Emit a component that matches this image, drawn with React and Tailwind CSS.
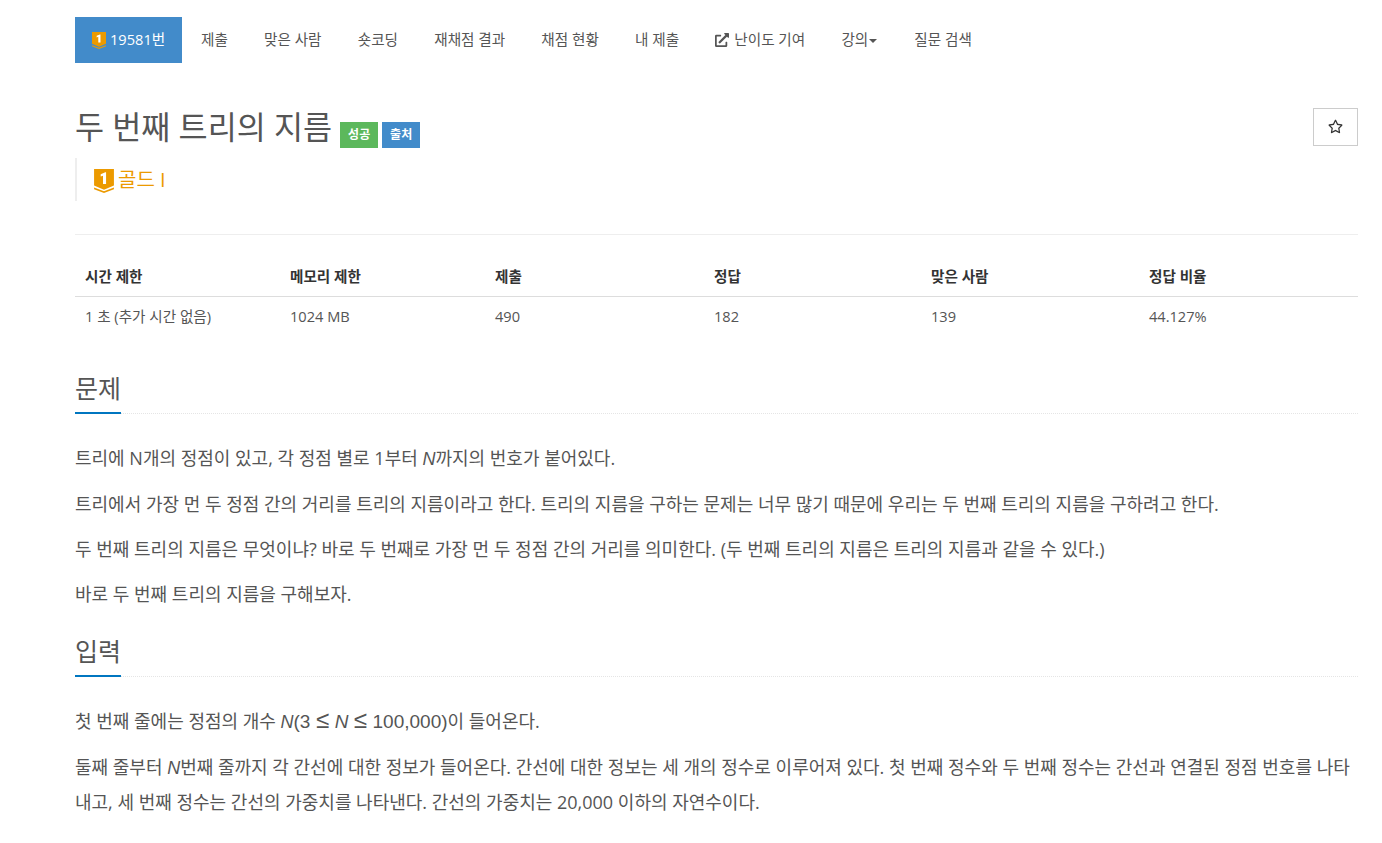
import React from 'react';
import { FaExternalLinkAlt, FaRegStar } from 'react-icons/fa';

const GoldBadge = ({ className }) => (
  <svg viewBox="0 0 24 29" className={className}>
    <path d="M0 0H24V20L12 25L0 20Z" fill="#ec9a00" />
    <path d="M0 22.5L12 27L24 22.5V24.5L12 29L0 24.5Z" fill="#ec9a00" />
    <path d="M14.5 4V18H10.8V8.2L8 9.2V6.4L13.6 4Z" fill="#fff" />
  </svg>
);

const tabs = ['제출', '맞은 사람', '숏코딩', '재채점 결과', '채점 현황', '내 제출'];

const stats = [
  { head: '시간 제한', value: '1 초 (추가 시간 없음)', width: 'w-[205px]' },
  { head: '메모리 제한', value: '1024 MB', width: 'w-[205px]' },
  { head: '제출', value: '490', width: 'w-[219px]' },
  { head: '정답', value: '182', width: 'w-[217px]' },
  { head: '맞은 사람', value: '139', width: 'w-[218px]' },
  { head: '정답 비율', value: '44.127%', width: '' },
];

function Heading({ children }) {
  return (
    <div className="relative border-b border-dotted border-[#e5e5e5] h-[41px]">
      <h2 className="text-[25px] leading-[30px] font-normal text-[#555]">{children}</h2>
      <div className="absolute left-0 bottom-[-1px] w-[46px] h-[2px] bg-[#0076c0]" />
    </div>
  );
}

const MathN = () => <i className="font-['Liberation_Sans',sans-serif]">N</i>;
const Leq = () => <span className="mx-[5.5px] text-[24px] leading-none">≤</span>;

export default function App() {
  return (
    <div className="pl-[75px] pr-[24px] bg-white text-[#555] text-[14.6px] overflow-hidden h-[843px] font-['Open_Sans','Noto_Sans_CJK_KR',sans-serif]">
      {/* Nav */}
      <ul className="flex pt-[17px] h-[63px]">
        <li className="flex items-center h-[46px] w-[107px] pl-[17px] pb-[1px] bg-[#428bca] text-white">
          <GoldBadge className="w-[14px] h-[17px] mr-[4px] mt-[1px]" />
          <span>19581번</span>
        </li>
        {tabs.map((t, i) => (
          <li key={t} className={`flex items-center h-[46px] pr-[18.1px] pb-[1px] whitespace-nowrap ${i === 0 ? 'pl-[19px]' : 'pl-[18.1px]'}`}>{t}</li>
        ))}
        <li className="flex items-center h-[46px] px-[18.1px] pb-[1px] whitespace-nowrap">
          <FaExternalLinkAlt className="w-[14px] h-[14px] mr-[5px]" />
          난이도 기여
        </li>
        <li className="flex items-center h-[46px] px-[18.1px] pb-[1px] whitespace-nowrap">
          강의
          <span className="ml-[1px] mt-[3px] border-x-[4.5px] border-t-[4.5px] border-x-transparent border-t-[#555]" />
        </li>
        <li className="flex items-center h-[46px] pl-[19px] pr-[18px] pb-[1px] whitespace-nowrap">질문 검색</li>
      </ul>

      {/* Title */}
      <div className="flex justify-between items-start pt-[45px]">
        <div className="flex items-start h-[40px]">
          <h1 className="text-[31.6px] leading-[38px] font-normal text-[#555]">두 번째 트리의 지름</h1>
          <span className="ml-[8px] mt-[14px] w-[38px] h-[26px] flex items-center justify-center bg-[#5cb85c] text-white text-[12px] font-bold">성공</span>
          <span className="ml-[4px] mt-[14px] w-[38px] h-[26px] flex items-center justify-center bg-[#428bca] text-white text-[12px] font-bold">출처</span>
        </div>
        <button className="w-[45px] h-[38px] border border-[#ccc] flex items-center justify-center text-[#333]">
          <FaRegStar className="w-[15px] h-[15px] -mt-[1px] -ml-[1px]" />
        </button>
      </div>

      <div className="mt-[10px] h-[43px] border-l-2 border-[#eee] pl-[17px] flex items-center text-[20px] text-[#ec9a00]">
        <GoldBadge className="w-[20px] h-[24px] mr-[4px] mt-[3px]" />
        <span>골드 I</span>
      </div>

      <div className="mt-[33px] border-t border-[#eee]" />

      {/* Stats */}
      <table className="w-full mt-[22px] table-fixed text-left">
        <thead>
          <tr className="border-b border-[#ddd] h-[39px]">
            {stats.map((s) => (
              <th key={s.head} className={`${s.width} pl-[10px] pt-[2px] font-bold text-[#333]`}>{s.head}</th>
            ))}
          </tr>
        </thead>
        <tbody>
          <tr className="h-[39px]">
            {stats.map((s) => (
              <td key={s.head} className="pl-[10px] pt-[2px]">{s.value}</td>
            ))}
          </tr>
        </tbody>
      </table>

      {/* Problem */}
      <section className="mt-[38px]">
        <Heading>문제</Heading>
        <div className="mt-[27px] flex flex-col gap-[11px] text-[18px] leading-[34px]">
          <p>트리에 N개의 정점이 있고, 각 정점 별로 1부터 <MathN />까지의 번호가 붙어있다.</p>
          <p>트리에서 가장 먼 두 정점 간의 거리를 트리의 지름이라고 한다. 트리의 지름을 구하는 문제는 너무 많기 때문에 우리는 두 번째 트리의 지름을 구하려고 한다.</p>
          <p>두 번째 트리의 지름은 무엇이냐? 바로 두 번째로 가장 먼 두 정점 간의 거리를 의미한다. (두 번째 트리의 지름은 트리의 지름과 같을 수 있다.)</p>
          <p>바로 두 번째 트리의 지름을 구해보자.</p>
        </div>
      </section>

      {/* Input */}
      <section className="mt-[25px]">
        <Heading>입력</Heading>
        <div className="mt-[27px] flex flex-col gap-[11px] text-[18px] leading-[34px]">
          <p>첫 번째 줄에는 정점의 개수 <MathN /><span className="font-['Liberation_Sans',sans-serif] text-[19px]">(3<Leq /><i>N</i><Leq />100,000)</span>이 들어온다.</p>
          <p>둘째 줄부터 <MathN />번째 줄까지 각 간선에 대한 정보가 들어온다. 간선에 대한 정보는 세 개의 정수로 이루어져 있다. 첫 번째 정수와 두 번째 정수는 간선과 연결된 정점 번호를 나타내고, 세 번째 정수는 간선의 가중치를 나타낸다. 간선의 가중치는 20,000 이하의 자연수이다.</p>
        </div>
      </section>
    </div>
  );
}
